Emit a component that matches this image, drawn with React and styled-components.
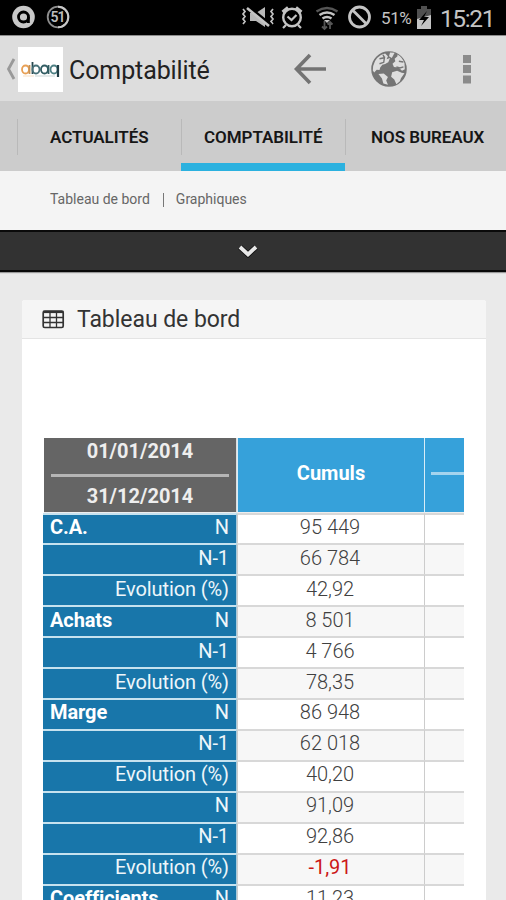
import styled, { createGlobalStyle } from "styled-components";

const GlobalStyle = createGlobalStyle`
  * {
    box-sizing: border-box;
  }
  body {
    margin: 0;
    background: #eaeaea;
    font-family: Roboto, "Liberation Sans", sans-serif;
  }
`;

const Screen = styled.div`
  width: 506px;
  height: 900px;
  overflow: hidden;
  display: flex;
  flex-direction: column;
  background: #eaeaea;
`;

const StatusBar = styled.header`
  flex: none;
  height: 36px;
  padding: 0 12px 1px 11px;
  display: flex;
  align-items: center;
  background: #000;
  border-bottom: 1px solid #8c8c8c;
  color: #c4c4c4;
`;

const StatusLeft = styled.div`
  display: flex;
  gap: 10px;
  flex: 1;
`;

const Battery = styled.span`
  font-size: 17px;
  width: 31px;
  margin: 2px 4px 0 8px;
  letter-spacing: -0.4px;
`;

const Clock = styled.span`
  font-size: 24.5px;
  line-height: 34px;
  width: 54px;
  margin-left: 8px;
  margin-top: 4px;
  letter-spacing: -1.4px;
  white-space: nowrap;
`;

const ActionBar = styled.div`
  flex: none;
  height: 65px;
  padding: 0 34px 0 6px;
  display: flex;
  align-items: center;
  background: #dddddd;
`;

const Logo = styled.div`
  width: 45px;
  height: 45px;
  margin: 2px 6px 0 2px;
  background: #fff;
`;

const PageTitle = styled.h1`
  margin: 3px 0 0;
  flex: 1;
  font-size: 25px;
  font-weight: 400;
  letter-spacing: -0.1px;
  color: #222;
`;

const Actions = styled.div`
  display: flex;
  align-items: center;
  padding-top: 1px;
`;

const Tabs = styled.nav`
  flex: none;
  height: 70px;
  display: flex;
  padding-left: 17px;
  background: #cccccc;
`;

const Tab = styled.div`
  flex: none;
  width: ${(p) => p.$width}px;
  height: 70px;
  display: flex;
  flex-direction: column;
  justify-content: space-between;
  border-bottom: ${(p) => (p.$active ? "8px solid #2bb1df" : "0")};
`;

const TabLabel = styled.span`
  height: 36px;
  margin-top: 18px;
  border-left: 1px solid #b9b9b9;
  display: flex;
  align-items: center;
  padding-left: ${(p) => p.$pad}px;
  font-size: 17px;
  font-weight: 600;
  white-space: nowrap;
  letter-spacing: -0.05px;
  color: #161616;
`;

const SubNav = styled.div`
  flex: none;
  height: 59px;
  padding: 0 50px 3px;
  display: flex;
  align-items: center;
  background: #f4f4f4;
  font-size: 14px;
  color: #666;
`;

const Separator = styled.i`
  width: 1px;
  height: 14px;
  margin: 2px 12px 0 13px;
  background: #777;
`;

const Drawer = styled.div`
  flex: none;
  height: 42px;
  display: flex;
  align-items: center;
  justify-content: center;
  padding: 0 11px 1px 0;
  background: #323232;
  border-top: 2px solid #0a0a0a;
  border-bottom: 2px solid #0a0a0a;
  box-shadow: 0 1px 1px #999;
`;

const Panel = styled.section`
  flex: none;
  margin: 28px 20px 0 22px;
  height: 640px;
  background: #fff;
  border-radius: 3px 3px 0 0;
`;

const PanelHeader = styled.div`
  height: 39px;
  display: flex;
  align-items: center;
  padding-left: 20px;
  background: #f5f5f5;
  border-bottom: 1px solid #e4e4e4;
  border-radius: 3px 3px 0 0;
`;

const PanelTitle = styled.h2`
  margin: 0 0 0 12px;
  font-size: 23px;
  font-weight: 400;
  letter-spacing: -0.05px;
  color: #333;
`;

const TableScroll = styled.div`
  margin: 99px 22px 0 21px;
  overflow: hidden;
`;

const Row = styled.div`
  display: grid;
  grid-template-columns: 194px 187px 40px;
  height: 30.93px;
`;

const HeadRow = styled(Row)`
  height: 74.5px;
  color: #fff;
  font-size: 20px;
  font-weight: 700;
`;

const Period = styled.div`
  margin-left: 1px;
  padding: 0 7px;
  display: flex;
  flex-direction: column;
  background: #656565;
  border-right: 1px solid #ddd;
  border-bottom: 1px solid #eee;
  color: #eeeeee;
  text-align: center;
`;

const PeriodDate = styled.span`
  height: ${(p) => p.$height}px;
  line-height: ${(p) => p.$line}px;
`;

const Rule = styled.hr`
  width: 100%;
  height: 3px;
  margin: 0;
  border: 0;
  background: ${(p) => p.$color};
`;

const ColumnHead = styled.div`
  display: flex;
  align-items: center;
  justify-content: center;
  padding: 0 0 3px ${(p) => p.$pad || 0}px;
  background: #36a1da;
  border-left: 1px solid #d9edf7;
  border-bottom: 1px solid #eee;
`;

const RowLabel = styled.div`
  display: flex;
  justify-content: space-between;
  align-items: center;
  padding: 0 7px 4px 7px;
  background: #1876aa;
  border-top: 2px solid #c6e2ef;
  border-right: 1px solid #a9cbdc;
  color: #eef6fa;
  font-size: 20px;
  letter-spacing: -0.1px;
`;

const Group = styled.b`
  font-weight: 700;
  color: #fff;
`;

const Cell = styled.div`
  display: flex;
  align-items: center;
  justify-content: center;
  padding: 0 2px 4px 0;
  background: ${(p) => (p.$odd ? "#f7f7f7" : "#fff")};
  border-left: 1px solid #ccc;
  border-top: 2px solid #d8d8d8;
  color: ${(p) => (p.$negative ? "#cc1717" : "#404040")};
  font-size: 20px;
  font-weight: ${(p) => (p.$negative ? 400 : 300)};
`;

const rows = [
  { group: "C.A.", label: "N", value: "95 449" },
  { label: "N-1", value: "66 784" },
  { label: "Evolution (%)", value: "42,92" },
  { group: "Achats", label: "N", value: "8 501" },
  { label: "N-1", value: "4 766" },
  { label: "Evolution (%)", value: "78,35" },
  { group: "Marge", label: "N", value: "86 948" },
  { label: "N-1", value: "62 018" },
  { label: "Evolution (%)", value: "40,20" },
  { label: "N", value: "91,09" },
  { label: "N-1", value: "92,86" },
  { label: "Evolution (%)", value: "-1,91" },
  { group: "Coefficients", label: "N", value: "11,23" },
];

const AvastIcon = () => (
  <svg width="25" height="24" viewBox="0 0 25 24">
    <circle cx="12.5" cy="12" r="11.3" fill="#c8c8c8" />
    <circle cx="12.5" cy="12" r="5" fill="none" stroke="#000" strokeWidth="2.8" />
    <path d="M17.4 12v6" stroke="#000" strokeWidth="2.8" />
  </svg>
);

const BadgeIcon = () => (
  <svg width="24" height="24" viewBox="0 0 24 24">
    <circle cx="12" cy="12" r="10.3" fill="none" stroke="#8e8e8e" strokeWidth="1.8" />
    <path d="M12 1.7a10.3 10.3 0 0 1 0 20.6" fill="none" stroke="#c8c8c8" strokeWidth="2" />
    <text x="11.5" y="17" textAnchor="middle" fontSize="14" fontWeight="600" letterSpacing="-1" fill="#bdbdbd">
      51
    </text>
  </svg>
);

const StatusIcons = () => (
  <svg width="132" height="30" viewBox="0 0 132 30" fill="none" stroke="#c4c4c4">
    {/* muted, vibrating speaker */}
    <path d="M2 7l2 2.500-2 2.500 2 2.500-2 2.500 2 2.500-2 2.500M32 7l-2 2.500 2 2.500-2 2.500 2 2.500-2 2.500 2 2.500" strokeWidth="1.700" />
    <path d="M9 11h6l9-6v20l-9-6H9z" fill="#b8b8b8" stroke="none" />
    <path d="M8 5l22 18" stroke="#000" strokeWidth="3" />
    <path d="M6 6l22 18" strokeWidth="2.600" />
    {/* alarm */}
    <circle cx="51" cy="15.500" r="8.800" strokeWidth="2.400" />
    <path d="M46.500 14.500l4 3.500 5-5M45 23l-3 3M57 23l3 3" strokeWidth="2.200" />
    <path d="M41.500 10l5.500-4.500M60.500 10L55 5.500" strokeWidth="3" />
    {/* wifi */}
    <path d="M75.500 9.500q10.500-7 21 0" stroke="#555" strokeWidth="2.400" />
    <path d="M78.500 13q7.500-5 15 0M81.500 16.500q4.500-3 9 0" strokeWidth="2.500" />
    <path d="M83 18h6l-3 3z" fill="#c4c4c4" stroke="none" />
    <path d="M83.500 19v8M81 24.500l2.500 2.500 2.500-2.500M89 27v-7M86.500 22.500L89 20l2.500 2.500" stroke="#555" strokeWidth="1.800" />
    {/* blocked */}
    <circle cx="118.500" cy="15" r="10" strokeWidth="2.800" />
    <path d="M111.500 8l14 14" strokeWidth="2.800" />
  </svg>
);

const BatteryIcon = () => (
  <svg width="16" height="26" viewBox="0 0 16 26">
    <path d="M5 2h6v3h4v10H1V5h4z" fill="#505050" />
    <path d="M1 15l14-4v14H1z" fill="#c4c4c4" />
    <path d="M11 7L3 16h5l-3 6 8-9H8z" fill="#000" />
  </svg>
);

const BackIcon = () => (
  <svg width="10" height="24" viewBox="0 0 10 24">
    <path d="M8 2L2.500 12 8 22" fill="none" stroke="#999" strokeWidth="2.800" />
  </svg>
);

const AbaqLogo = () => (
  <svg width="45" height="45" viewBox="0 0 45 45" fill="none" strokeWidth="1.800">
    <ellipse cx="7.500" cy="22.500" rx="3.500" ry="4" stroke="#e8a055" />
    <path d="M11.500 18v9" stroke="#c69155" />
    <path d="M14.500 15v12" stroke="#27484e" />
    <ellipse cx="18" cy="22.500" rx="3.500" ry="4" stroke="#477078" />
    <ellipse cx="26.500" cy="22.500" rx="3.500" ry="4" stroke="#315c62" />
    <path d="M30.500 18v9" stroke="#315c62" />
    <ellipse cx="36" cy="22.500" rx="3.500" ry="4" stroke="#4e8084" />
    <path d="M40 18v12" stroke="#203d45" strokeWidth="2.200" />
    <path d="M5 29h11" stroke="#f7dfc5" strokeWidth="1" />
    <path d="M17 29h20" stroke="#c9d5d5" strokeWidth="1" />
  </svg>
);

const ArrowIcon = () => (
  <svg width="34" height="32" viewBox="0 0 34 32">
    <path d="M33 16H3M17 2L3.500 16 17 30" fill="none" stroke="#737373" strokeWidth="3.600" />
  </svg>
);

const GlobeIcon = () => (
  <svg width="38" height="38" viewBox="0 0 108 108" style={{ marginLeft: 43, marginRight: 54 }}>
    <circle cx="54" cy="54" r="48" fill="#757575" stroke="#757575" strokeWidth="5" />
    <g fill="#dedede">
      <path d="M8 58Q8 28 31 14l12-4 8 8-4 8 10-3-5 12-9 5-8 2-6 8-2 7-8-1-7 8z" />
      <path d="M57 7l13 1-8 15-8-5z" />
      <path d="M78 13q14 8 20 25l1 17-8 4-10-9-13-2-4-9 8-7-2-7 8-7z" />
      <path d="M63 63l14-4 13 6 8 1-10 14-3 9-10 8-6-13-9-8z" />
      <path d="M24 68l15-1 12 10-5 10 5 12-13-4-4-14z" />
    </g>
    <path d="M27 25l14-3-2 13-12 4M37 14l5 9M82 32l13 2M75 48l10 3 10-3" fill="none" stroke="#757575" strokeWidth="4" />
  </svg>
);

const MoreIcon = () => (
  <svg width="10" height="30" viewBox="0 0 10 30" fill="#8b8b8b">
    <path d="M1 1h8v8H1zM1 11h8v8H1zM1 21.500h8v8H1z" />
  </svg>
);

const ChevronIcon = () => (
  <svg width="20" height="14" viewBox="0 0 20 14">
    <path d="M2 3l8 7.500L18 3" fill="none" stroke="#111" strokeWidth="5.500" />
    <path d="M2 3l8 7.500L18 3" fill="none" stroke="#e8e8e8" strokeWidth="3.800" />
  </svg>
);

const TableIcon = () => (
  <svg width="23" height="19" viewBox="0 0 23 19" fill="none" stroke="#333">
    <rect x="1.200" y="1.200" width="20" height="16.300" rx="1.500" strokeWidth="1.700" />
    <path d="M1 2h20.500" strokeWidth="2.200" />
    <path d="M1 7.500h20M1 12.500h20M8 1v17M14.500 1v17" strokeWidth="1.300" />
  </svg>
);

const App = () => {
  return (
    <Screen>
      <GlobalStyle />
      <StatusBar>
        <StatusLeft>
          <AvastIcon />
          <BadgeIcon />
        </StatusLeft>
        <StatusIcons />
        <Battery>51%</Battery>
        <BatteryIcon />
        <Clock>15:21</Clock>
      </StatusBar>
      <ActionBar>
        <BackIcon />
        <Logo>
          <AbaqLogo />
        </Logo>
        <PageTitle>Comptabilité</PageTitle>
        <Actions>
          <ArrowIcon />
          <GlobeIcon />
          <MoreIcon />
        </Actions>
      </ActionBar>
      <Tabs>
        <Tab $width={164}>
          <TabLabel $pad={32}>ACTUALITÉS</TabLabel>
        </Tab>
        <Tab $width={164} $active>
          <TabLabel $pad={22}>COMPTABILITÉ</TabLabel>
        </Tab>
        <Tab $width={161}>
          <TabLabel $pad={25}>NOS BUREAUX</TabLabel>
        </Tab>
      </Tabs>
      <SubNav>
        <span>Tableau de bord</span>
        <Separator />
        <span>Graphiques</span>
      </SubNav>
      <Drawer>
        <ChevronIcon />
      </Drawer>
      <Panel>
        <PanelHeader>
          <TableIcon />
          <PanelTitle>Tableau de bord</PanelTitle>
        </PanelHeader>
        <TableScroll>
          <HeadRow>
            <Period>
              <PeriodDate $height={36} $line={26}>01/01/2014</PeriodDate>
              <Rule $color="#b5b5b5" />
              <PeriodDate $height={34.5} $line={38}>31/12/2014</PeriodDate>
            </Period>
            <ColumnHead>Cumuls</ColumnHead>
            <ColumnHead $pad={6}>
              <Rule $color="#a5d4ee" />
            </ColumnHead>
          </HeadRow>
          {rows.map((row, i) => (
            <Row key={i}>
              <RowLabel>
                <Group>{row.group}</Group>
                <span>{row.label}</span>
              </RowLabel>
              <Cell $odd={i % 2 === 1} $negative={row.value.startsWith("-")}>
                {row.value}
              </Cell>
              <Cell $odd={i % 2 === 1} />
            </Row>
          ))}
        </TableScroll>
      </Panel>
    </Screen>
  );
};

export default App;
